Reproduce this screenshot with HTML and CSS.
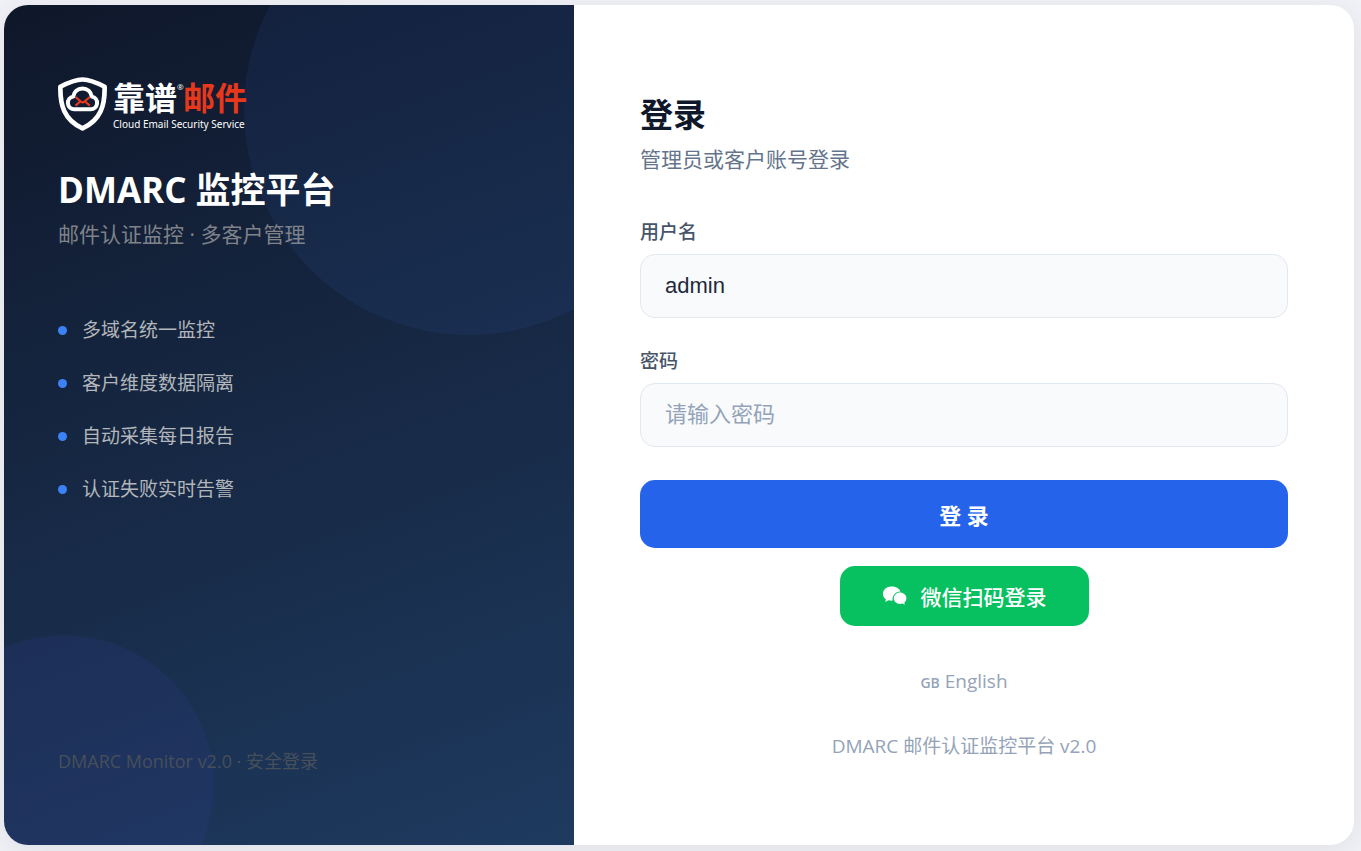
FILE: index.html
```html
<!DOCTYPE html>
<html lang="zh-CN">
<head>
  <meta charset="UTF-8">
  <meta name="viewport" content="width=device-width, initial-scale=1.0">
  <title>登录 - DMARC 监控平台</title>
  <link rel="stylesheet" href="styles.css">
</head>
<body>

  <div class="login-card">
    <aside class="brand">
      <div class="logo">
        <svg class="logo-mark" viewBox="0 0 50 54" aria-hidden="true">
          <path d="M24.500 2.500C30 2.500 38 5.200 46.600 9.800C47 28 43 43 24.500 51.300C6 43 2 28 2.400 9.800C11 5.200 19 2.500 24.500 2.500Z" fill="none" stroke="#fff" stroke-width="4.700" stroke-linejoin="round"/>
          <path d="M16.500 32.300A6.400 6.400 0 0 1 15.200 19.600C16 14.800 19.500 11.400 24.500 11.400S33 14.800 33.800 19.600A6.400 6.400 0 0 1 32.500 32.300Z" fill="none" stroke="#fff" stroke-width="4" stroke-linejoin="round"/>
          <path d="M17.600 20L22.800 24.600Q24.600 26 26.400 24.600L31.800 20M17.600 28.600L21.600 25M31.800 28.600L27.600 25" fill="none" stroke="#e8381b" stroke-width="2.200"/>
        </svg>
        <div class="logo-text">
          <div class="logo-name">靠谱<sup>®</sup><span>邮件</span></div>
          <div class="logo-tag">Cloud Email Security Service</div>
        </div>
      </div>
      <h1>DMARC 监控平台</h1>
      <p class="brand-sub">邮件认证监控 · 多客户管理</p>
      <ul class="features">
        <li>多域名统一监控</li>
        <li>客户维度数据隔离</li>
        <li>自动采集每日报告</li>
        <li>认证失败实时告警</li>
      </ul>
      <p class="brand-footer">DMARC Monitor v2.0 · 安全登录</p>
    </aside>

    <main class="panel">
      <h2>登录</h2>
      <p class="panel-sub">管理员或客户账号登录</p>
      <form>
        <div class="field">
          <label for="username">用户名</label>
          <input type="text" id="username" name="username" value="admin">
        </div>
        <div class="field">
          <label for="password">密码</label>
          <input type="password" id="password" name="password" placeholder="请输入密码">
        </div>
        <button type="submit" class="btn-login">登 录</button>
      </form>
      <a class="btn-wechat" href="#">
        <svg viewBox="0 0 25 20" aria-hidden="true">
          <path d="M9.500 .5C4.700 .5 .9 3.700 .9 7.700c0 2.300 1.200 4.200 3 5.500L3.200 16l3.300-1.700c1 .3 2 .4 3 .4 .400 0 .8 0 1.200-.1-.9-5 2.600-9 7.700-9.200C17.300 2.500 13.700 .5 9.500 .5Z"/>
          <path d="M18 6.600c-3.500 0-6.200 2.500-6.200 5.600s2.700 5.700 6.200 5.700c.9 0 1.700-.1 2.400-.4l2.400 1.200-.5-2.200c1.300-1 2.100-2.600 2.100-4.300 0-3.100-2.900-5.600-6.400-5.600Z"/>
        </svg>
        微信扫码登录
      </a>
      <a class="lang" href="#"><span>GB</span> English</a>
      <p class="panel-footer">DMARC 邮件认证监控平台 v2.0</p>
    </main>
  </div>

</body>
</html>
```
FILE: styles.css
```css
* {
  box-sizing: border-box;
  margin: 0;
  padding: 0;
}

body {
  display: flex;
  min-height: 100vh;
  padding: 5px 7px 6px 4px;
  background: #f0f2f7;
  font-family: "Open Sans", "Noto Sans CJK SC", sans-serif;
}

a {
  text-decoration: none;
}

.login-card {
  flex: 1;
  display: grid;
  grid-template-columns: 19fr 26fr;
  border-radius: 24px;
  overflow: hidden;
  background: #fff;
  box-shadow: 0 6px 36px rgba(0, 0, 0, 0.08);
}

/* left side */
.brand {
  position: relative;
  display: flex;
  flex-direction: column;
  overflow: hidden;
  padding: 72px 54px;
  background: linear-gradient(160deg, #0f172a 0%, #1e3a5f 100%);
}

.brand::before,
.brand::after {
  content: "";
  position: absolute;
  border-radius: 50%;
}

.brand::before {
  top: -120px;
  right: -120px;
  width: 450px;
  height: 450px;
  background: rgba(59, 130, 246, 0.08);
}

.brand::after {
  bottom: -90px;
  left: -90px;
  width: 300px;
  height: 300px;
  background: rgba(70, 70, 200, 0.1);
}

.brand > * {
  position: relative;
  z-index: 1;
}

.logo {
  display: flex;
  gap: 5px;
  height: 54px;
}

.logo-mark {
  width: 50px;
  height: 54px;
}

.logo-text {
  color: #fff;
  white-space: nowrap;
}

.logo-name {
  display: flex;
  font-family: "Noto Sans CJK SC", sans-serif;
  font-size: 32px;
  font-weight: 700;
  line-height: 38px;
}

.logo-name sup {
  width: 6px;
  font-family: "Open Sans", sans-serif;
  font-size: 8px;
  font-weight: 400;
  line-height: 20px;
}

.logo-name span {
  color: #e8381b;
}

.logo-tag {
  margin-top: 3px;
  font-family: "Noto Sans", sans-serif;
  font-size: 10px;
  line-height: 13px;
}

.brand h1 {
  margin-top: 35px;
  color: #fff;
  font-size: 35px;
  font-weight: 700;
  line-height: 48px;
}

.brand-sub {
  margin-top: 5px;
  color: #7f8389;
  font-size: 21px;
  line-height: 30px;
}

.features {
  display: flex;
  flex-direction: column;
  gap: 25px;
  margin-top: 67px;
  list-style: none;
}

.features li {
  display: flex;
  align-items: center;
  gap: 15px;
  color: #b3b6ba;
  font-size: 19px;
  line-height: 28px;
}

.features li::before {
  content: "";
  width: 9px;
  height: 9px;
  border-radius: 50%;
  background: #3b82f6;
}

.brand-footer {
  margin-top: auto;
  color: #474f5b;
  font-size: 18px;
  line-height: 24px;
}

/* right side */
.panel {
  display: flex;
  flex-direction: column;
  padding: 86px 66px 66px;
}

.panel h2 {
  color: #0f172a;
  font-size: 33px;
  font-weight: 700;
  line-height: 48px;
}

.panel-sub {
  margin: 5px 0 44px;
  color: #64748b;
  font-size: 21px;
  line-height: 30px;
}

.field {
  margin-bottom: 29px;
}

.field label {
  display: block;
  margin-bottom: 8px;
  color: #475569;
  font-size: 19px;
  font-weight: 500;
  line-height: 28px;
}

.field input {
  display: block;
  width: 100%;
  height: 64px;
  padding: 0 24px;
  border: 1px solid #e2e8f0;
  border-radius: 15px;
  background: #f8fafc;
  color: #1e293b;
  font-family: "Liberation Sans", "Noto Sans CJK SC", sans-serif;
  font-size: 22px;
  outline: none;
}

.field input::placeholder {
  color: #94a3b8;
}

.field input:focus {
  border-color: #2563eb;
}

.btn-login {
  display: block;
  width: 100%;
  height: 68px;
  margin-top: 33px;
  border: none;
  border-radius: 15px;
  background: #2563eb;
  color: #fff;
  font-family: inherit;
  font-size: 22px;
  font-weight: 700;
  cursor: pointer;
}

.btn-wechat {
  display: flex;
  align-items: center;
  gap: 14px;
  align-self: center;
  height: 60px;
  margin-top: 18px;
  padding: 0 42px;
  border-radius: 15px;
  background: #07c160;
  color: #fff;
  font-size: 21px;
  font-weight: 500;
}

.btn-wechat svg {
  width: 25px;
  height: 20px;
  fill: #fff;
}

.lang {
  align-self: center;
  margin-top: 41px;
  color: #94a3b8;
  font-size: 19px;
  line-height: 28px;
}

.lang span {
  font-size: 14px;
  font-weight: 600;
}

.panel-footer {
  margin-top: 35px;
  color: #94a3b8;
  font-size: 19px;
  line-height: 28px;
  text-align: center;
}
```
